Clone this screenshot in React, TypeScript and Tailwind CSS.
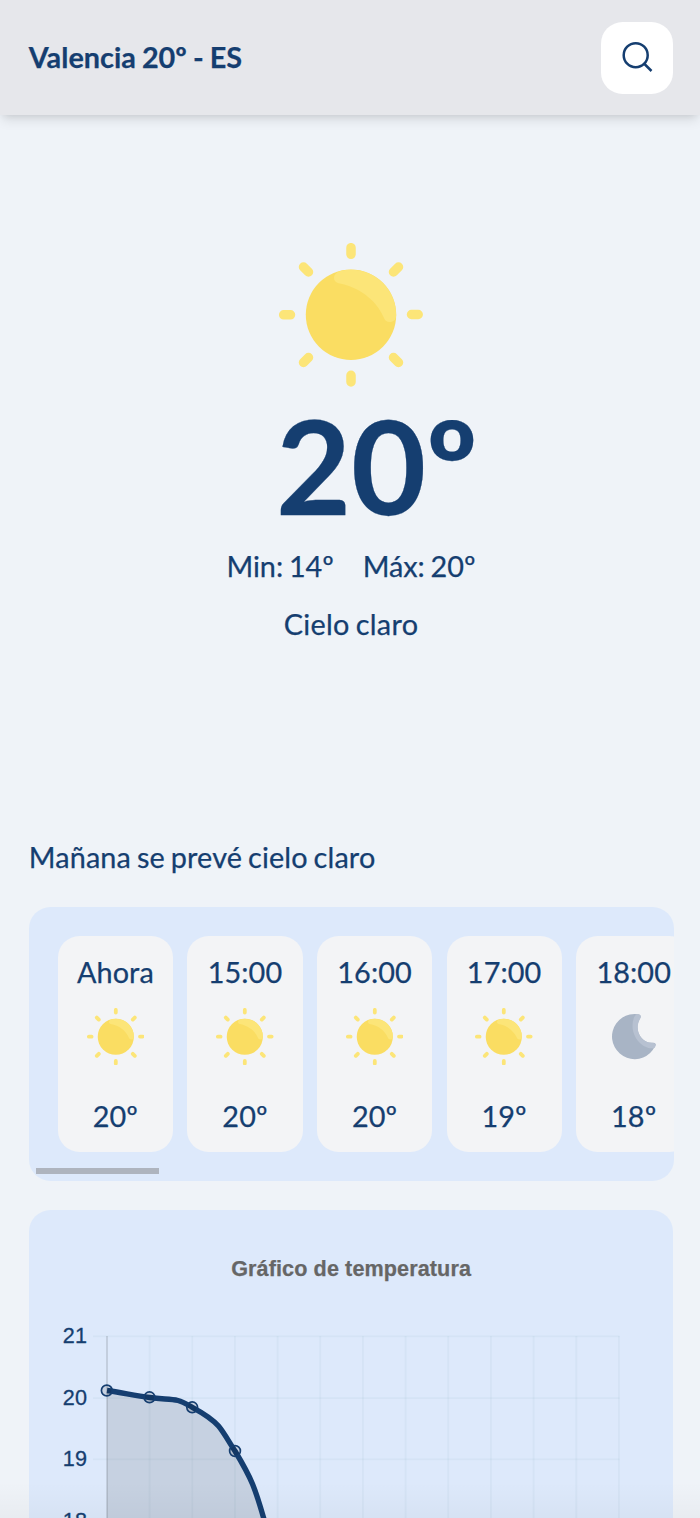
import React from "react";

const hours = [
  { time: "Ahora", temp: "20º", icon: "sun" },
  { time: "15:00", temp: "20º", icon: "sun" },
  { time: "16:00", temp: "20º", icon: "sun" },
  { time: "17:00", temp: "19º", icon: "sun" },
  { time: "18:00", temp: "18º", icon: "moon" },
];

function Sun({ className }: { className: string }) {
  return (
    <svg viewBox="0 0 144 144" className={className}>
      <circle cx="72" cy="71.800" r="45.200" fill="#fadd62" />
      <path
        d="M61.500 28A45.200 45.200 0 0 1 117.200 72C117.200 77 114 79 111 79C107.500 79 105.500 77 104.500 74C97 57 80 44 59.500 40.300C53 38.500 53.500 30 61.500 28Z"
        fill="#fce578"
      />
      <path
        d="M72 4.700V11.300M72 132.300V138.900M4.700 71.800H11.500M132.500 71.500H139.200M24.500 24L29.500 29M119.500 24L114.500 29M24.500 119.500L29.500 114.500M119.500 119.500L114.500 114.500"
        stroke="#fce578"
        strokeWidth="9.500"
        strokeLinecap="round"
      />
    </svg>
  );
}

function Moon({ className }: { className: string }) {
  return (
    <svg viewBox="0 0 57.6 57.6" className={className}>
      <path
        d="M33 6.200A22.600 22.600 0 1 0 50 38.300C52 35.500 50 34.500 46.500 34.800C37 34.500 29 23 34 12.500C36.500 8.500 36 6.800 33 6.200Z"
        fill="#a8b4c5"
      />
      <path
        d="M33 6.200C36.300 6.500 36.700 8.700 34.800 11.300C29.500 21.500 35 34.500 47 34.800C50.700 34.800 51.700 37 49.500 40C38 42.500 23 27 28.800 10C29.700 7.500 31 6.200 33 6.200Z"
        fill="#b7c1d1"
      />
    </svg>
  );
}

function Chart() {
  const columns = [149.6, 192.3, 235, 277.6, 320.3, 363, 405.6, 448.3, 491, 533.6, 576.3, 619];
  const rows = [1336.3, 1398.2, 1459.3];
  return (
    <svg viewBox="29 1306 644 212" className="block h-[212px] w-[644px]" fill="none">
      <path
        d="M107 1390.500C121 1392.500 135 1395.500 149.600 1397.500C162 1399.500 170 1398.500 178 1400.500C184 1402 188 1405 192.300 1407.300C201 1412 211 1417.500 218.500 1426C224 1432.500 229 1442 235 1451C241 1461 248 1473 252.500 1484C257.500 1496 261.500 1510 267 1530H107Z"
        fill="#000"
        fillOpacity="0.1"
      />
      <g stroke="#17716e" strokeOpacity="0.04" strokeWidth="1.800">
        {columns.map((x) => (
          <path key={x} d={`M${x} 1336V1518`} />
        ))}
        {rows.map((y) => (
          <path key={y} d={`M93 ${y}H619.500`} />
        ))}
      </g>
      <path d="M107 1336V1518" stroke="#000" strokeOpacity="0.13" strokeWidth="1.800" />
      <path
        d="M107 1390.500C121 1392.500 135 1395.500 149.600 1397.500C162 1399.500 170 1398.500 178 1400.500C184 1402 188 1405 192.300 1407.300C201 1412 211 1417.500 218.500 1426C224 1432.500 229 1442 235 1451C241 1461 248 1473 252.500 1484C257.500 1496 261.500 1510 267 1530"
        stroke="#153e70"
        strokeWidth="5.400"
      />
      <g fill="#000" fillOpacity="0.1" stroke="#153e70" strokeWidth="1.700">
        <circle cx="106.800" cy="1390.500" r="5.400" />
        <circle cx="149.500" cy="1397.300" r="5.400" />
        <circle cx="192.200" cy="1407.300" r="5.400" />
        <circle cx="235" cy="1451" r="5.400" />
      </g>
      <g
        fill="#153e70"
        stroke="#153e70"
        strokeWidth="0.300"
        fontSize="21.6"
        textAnchor="end"
        className="font-['Liberation_Sans',sans-serif]"
      >
        <text x="87" y="1343.300">21</text>
        <text x="87" y="1405">20</text>
        <text x="87" y="1466.300">19</text>
        <text x="87" y="1528">18</text>
      </g>
    </svg>
  );
}

export default function App() {
  return (
    <div className="relative flex h-[1518px] w-[700px] flex-col overflow-hidden bg-[#eff3f8] font-['Lato',sans-serif] text-[28.8px] leading-[43.2px] text-[#153e70] [-webkit-text-stroke-width:0.25px] [word-spacing:-1.6px] tracking-[0.1px]">
      <header className="flex h-[115px] w-full shrink-0 items-center justify-between bg-[#e6e7eb] pl-[28.8px] pr-[26.8px] shadow-[0_7px_11px_-2px_rgba(0,0,0,0.1),0_4px_7px_-4px_rgba(0,0,0,0.1)]">
        <h1 className="font-bold tracking-[0px] [word-spacing:-0.9px]">Valencia 20º - ES</h1>
        <button className="flex size-[72px] items-center justify-center rounded-[21.6px] bg-white">
          <svg viewBox="0 0 45 45" className="size-[45px]" fill="none" stroke="#153e70" strokeWidth="2.5">
            <circle cx="20.700" cy="20.200" r="12" />
            <path d="M29 28.500L36.500 36" />
          </svg>
        </button>
      </header>

      <main className="flex flex-col pl-[28.8px] pr-[26.8px]">
        <section className="flex h-[720.800px] flex-col items-center pt-[127.800px]">
          <div className="flex w-[144px] flex-col">
            <Sun className="size-[144px]" />
            <p className="-ml-[2.900px] h-[130px] whitespace-nowrap pt-[14px] text-[129.600px] font-bold leading-[129.600px] tracking-[-0.2px]">
              20º
            </p>
          </div>
          <div className="mt-[28.500px] flex gap-[28.800px] tracking-[0px]">
            <span>Min: 14º</span>
            <span>Máx: 20º</span>
          </div>
          <p className="mt-[14.400px] tracking-[0.3px]">Cielo claro</p>
        </section>

        <p className="tracking-[0.14px]">Mañana se prevé cielo claro</p>

        <section className="relative mt-[28px] flex h-[273.600px] w-[645px] gap-[14.400px] overflow-hidden rounded-[21.600px] bg-[#dde9fb] py-[28.800px] pl-[29px]">
          {hours.map((h) => (
            <div
              key={h.time}
              className="flex h-[216px] w-[115.200px] shrink-0 flex-col items-center rounded-[21.600px] bg-[#f3f4f6] pt-[15.400px]"
            >
              <span>{h.time}</span>
              {h.icon === "sun" ? (
                <Sun className="mt-[13.400px] size-[57.600px]" />
              ) : (
                <Moon className="mt-[13.400px] size-[57.600px]" />
              )}
              <span className="mt-[29.800px]">{h.temp}</span>
            </div>
          ))}
          <div className="absolute bottom-[6.800px] left-[7.200px] h-[6px] w-[123px] bg-[#aeb4be]" />
        </section>

        <section className="mt-[29px] flex h-[400px] w-[644.600px] flex-col rounded-[21.600px] bg-[#dde9fb]">
          <h2 className="h-[96px] pt-[37px] text-center font-['Liberation_Sans',sans-serif] text-[21.600px] font-bold text-[#666] [word-spacing:0px]">
            Gráfico de temperatura
          </h2>
          <Chart />
        </section>
      </main>
      <div className="pointer-events-none absolute inset-x-0 bottom-0 h-9 bg-linear-to-b from-transparent to-black/3" />
    </div>
  );
}
